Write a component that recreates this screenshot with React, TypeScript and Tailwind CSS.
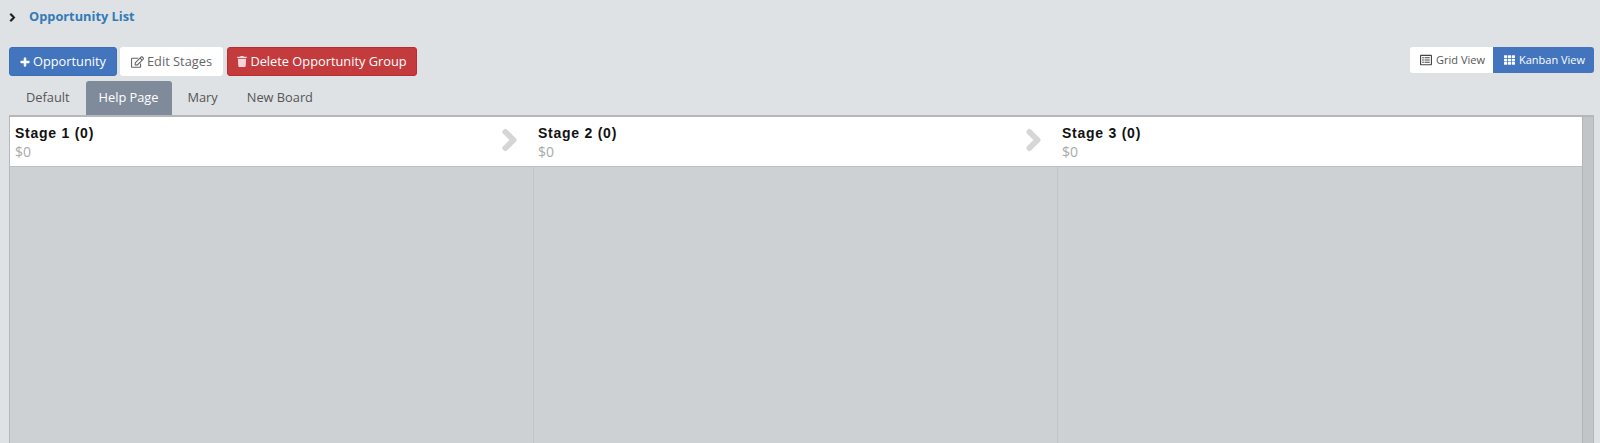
import { FaChevronRight, FaPlus, FaRegEdit, FaRegListAlt, FaTh, FaTrash } from 'react-icons/fa';

const tabs = ['Default', 'Help Page', 'Mary', 'New Board'];
const activeTab = 'Help Page';

const stages = [
  { name: 'Stage 1 (0)', total: '$0' },
  { name: 'Stage 2 (0)', total: '$0' },
  { name: 'Stage 3 (0)', total: '$0' },
];

export default function App() {
  return (
    <div className="flex h-[443px] w-[1600px] flex-col overflow-hidden bg-[#dfe2e5] pl-[9px] pr-[6px] font-['Open_Sans',sans-serif]">
      {/* Title */}
      <div className="flex h-[47px] shrink-0 items-start pt-[8px]">
        <FaChevronRight className="mt-[5px] h-[9px] w-[7px] overflow-visible stroke-current stroke-[50] text-[#111]" />
        <span className="ml-[13px] text-[12.8px] leading-[17px] font-bold text-[#337ab7]">Opportunity List</span>
      </div>

      {/* Toolbar */}
      <div className="flex h-[30px] shrink-0 items-start justify-between">
        <div className="flex gap-[3px]">
          <button className="flex h-[29px] w-[108px] items-center justify-center gap-[3px] rounded-[3px] border border-[#3a6fb5] bg-[#4275bd] text-[12.8px] text-white">
            <FaPlus className="h-[10px] w-[10px] overflow-visible stroke-current stroke-[30]" />
            Opportunity
          </button>
          <button className="flex h-[29px] w-[103px] items-center justify-center gap-[3px] rounded-[3px] bg-white text-[12.8px] text-[#666]">
            <FaRegEdit className="h-[12px] w-[13px]" />
            Edit Stages
          </button>
          <button className="ml-[1px] flex h-[29px] w-[190px] items-center justify-center gap-[3px] rounded-[3px] border border-[#bb2d2d] bg-[#c43b3d] text-[12.8px] text-white">
            <FaTrash className="h-[11px] w-[10px] opacity-80" />
            Delete Opportunity Group
          </button>
        </div>
        <div className="flex">
          <button className="flex h-[26px] w-[83px] items-center justify-center gap-[4px] rounded-l-[3px] bg-white pl-[2px] text-[11px] text-[#555]">
            <FaRegListAlt className="h-[12px] w-[12px] text-[#444]" />
            Grid View
          </button>
          <button className="flex h-[26px] w-[101px] items-center justify-center gap-[4px] rounded-r-[3px] bg-[#4275bd] pl-[2px] text-[11px] text-white">
            <FaTh className="h-[12px] w-[11px]" />
            Kanban View
          </button>
        </div>
      </div>

      {/* Tabs */}
      <div className="mt-[4px] flex h-[34px] shrink-0 items-stretch gap-[3px] pl-[4px]">
        {tabs.map(tab => (
          <div
            key={tab}
            className={`flex items-center rounded-t-[3px] pl-[13px] text-[12.8px] ${
              tab === activeTab ? 'mr-[-1px] bg-[#7f8b9b] pr-[14px] text-white' : 'pr-[13px] text-[#555]'
            }`}
          >
            {tab}
          </div>
        ))}
      </div>

      {/* Board */}
      <div className="flex min-h-0 flex-1 border-t-2 border-l border-[#b5b8ba]">
        <div className="grid flex-1 grid-cols-[524px_524px_1fr] grid-rows-[50px_1fr]">
          {stages.map((stage, index) => (
            <div key={stage.name} className={`relative border-b border-[#bdbfc1] bg-white pt-[7px] ${index === 0 ? 'pl-[5px]' : 'pl-[4px]'}`}>
              <div className="font-['Liberation_Sans',sans-serif] text-[14px] leading-[18px] font-bold tracking-[0.75px] text-[#111]">
                {stage.name}
              </div>
              <div className="text-[14px] leading-[19px] text-[#aaa]">{stage.total}</div>
              {index < stages.length - 1 && (
                <FaChevronRight className="absolute top-[11px] right-[17px] h-[24px] w-[15px] overflow-visible stroke-current stroke-[40] text-[#d6d6d6]" />
              )}
            </div>
          ))}
          {stages.map((stage, index) => (
            <div
              key={stage.name}
              className={`bg-[#cdd1d4] ${index < stages.length - 1 ? 'border-r border-[#c2c5c8]' : ''}`}
            />
          ))}
        </div>
        <div className="w-[12px] border-x border-[#b4b7b9] bg-[#c2c5c8]" />
      </div>
    </div>
  );
}
